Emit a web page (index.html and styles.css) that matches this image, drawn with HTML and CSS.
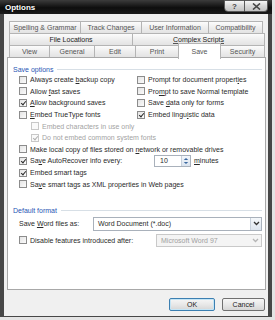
FILE: index.html
```html
<!DOCTYPE html>
<html lang="en">
<head>
    <meta charset="UTF-8">
    <title>Options</title>
    <link rel="stylesheet" href="styles.css">
</head>
<body>
    <div class="window">
        <div class="titlebar">
            <span class="title">Options</span>
            <div class="caption">
                <span class="cbtn help">?</span>
                <span class="cbtn close">
                    <svg width="9" height="7" viewBox="0 0 9 7"><path d="M1 0.5 L8 6.5 M8 0.5 L1 6.5" stroke="#444" stroke-width="1.6"/></svg>
                </span>
            </div>
        </div>
        <div class="body">
            <div class="tabs">
                <div class="tab-row">
                    <div class="tab" style="width:72px">Spelling &amp; Grammar</div>
                    <div class="tab" style="width:62px">Track Changes</div>
                    <div class="tab" style="width:68px">User Information</div>
                    <div class="tab" style="width:55px">Compatibility</div>
                </div>
                <div class="tab-row mid">
                    <div class="tab" style="width:124px">File Locations</div>
                    <div class="tab" style="width:133px"><span class="focus">Complex Scripts</span></div>
                </div>
                <div class="tab-row">
                    <div class="tab" style="width:41px">View</div>
                    <div class="tab" style="width:46px">General</div>
                    <div class="tab" style="width:42px">Edit</div>
                    <div class="tab" style="width:44px">Print</div>
                    <div class="tab active" style="width:43px">Save</div>
                    <div class="tab" style="width:45px">Security</div>
                </div>
            </div>

            <div class="panel">
                <div class="group">Save options</div>
                <div class="opts">
                    <div class="grid2">
                        <div class="row"><span class="cb"></span><span>Always create <u>b</u>ackup copy</span></div>
                        <div class="row"><span class="cb"></span><span>Prompt for document propert<u>i</u>es</span></div>
                        <div class="row"><span class="cb"></span><span>Allow <u>f</u>ast saves</span></div>
                        <div class="row"><span class="cb"></span><span>Pro<u>m</u>pt to save Normal template</span></div>
                        <div class="row"><span class="cb on"></span><span><u>A</u>llow background saves</span></div>
                        <div class="row"><span class="cb"></span><span>Save <u>d</u>ata only for forms</span></div>
                        <div class="row"><span class="cb"></span><span><u>E</u>mbed TrueType fonts</span></div>
                        <div class="row"><span class="cb on"></span><span>Embed lingu<u>i</u>stic data</span></div>
                    </div>
                    <div class="row sub off"><span class="cb"></span><span>Embed characters in use only</span></div>
                    <div class="row sub off"><span class="cb on"></span><span>Do not embed common system fonts</span></div>
                    <div class="row"><span class="cb"></span><span>Make local copy of files stored on <u>n</u>etwork or removable drives</span></div>
                    <div class="row">
                        <span class="cb on"></span><span class="autolabel">Sa<u>v</u>e AutoRecover info every:</span>
                        <span class="spin">
                            <span class="spin-val">10</span>
                            <span class="spin-btns">
                                <svg width="9" height="10" viewBox="0 0 9 10"><path d="M2 4 L4.5 1.5 L7 4 Z M2 6 L4.5 8.5 L7 6 Z" fill="#3d6aa0"/></svg>
                            </span>
                        </span>
                        <span class="after"><u>m</u>inutes</span>
                    </div>
                    <div class="row"><span class="cb on"></span><span>Embed smart tags</span></div>
                    <div class="row"><span class="cb"></span><span>Sa<u>v</u>e smart tags as XML properties in Web pages</span></div>
                </div>

                <div class="group format">Default format</div>
                <div class="field">
                    <span class="field-label">Save <u>W</u>ord files as:</span>
                    <span class="select wide">
                        <span class="select-val">Word Document (*.doc)</span>
                        <span class="arrow">
                            <svg width="7" height="5" viewBox="0 0 7 5"><path d="M1 1 L3.5 3.5 L6 1" stroke="#333" stroke-width="1.3" fill="none"/></svg>
                        </span>
                    </span>
                </div>
                <div class="field second">
                    <span class="cb"></span><span class="disable-label">Disable features introduced after:</span>
                    <span class="select narrow disabled">
                        <span class="select-val">Microsoft Word 97</span>
                        <span class="arrow">
                            <svg width="7" height="5" viewBox="0 0 7 5"><path d="M1 1 L3.5 3.5 L6 1" stroke="#b5b5b5" stroke-width="1.3" fill="none"/></svg>
                        </span>
                    </span>
                </div>
            </div>

            <div class="buttons">
                <span class="btn default ok">OK</span>
                <span class="btn cancel">Cancel</span>
            </div>
        </div>
    </div>
</body>
</html>
```

FILE: styles.css
```css
* {
    box-sizing: border-box;
}
body {
    margin: 0;
    background-color: #e4e4e4;
    font-family: "Liberation Sans", Arial, sans-serif;
    font-size: 7px;
    color: #2a2a2a;
}
u {
    text-decoration: underline;
}
.window {
    width: 272px;
    height: 317px;
    background-color: #474747;
    display: flex;
    flex-direction: column;
}
.titlebar {
    height: 14px;
    background: linear-gradient(#3c3c3c, #0e0e0e 55%, #1b1b1b);
    display: flex;
    align-items: flex-start;
    padding-left: 5px;
}
.title {
    color: white;
    font-weight: bold;
    font-size: 8px;
    line-height: 15px;
    text-shadow: 0 0 3px #000;
}
.caption {
    margin-left: auto;
    margin-right: 4px;
    display: flex;
}
.cbtn {
    width: 21px;
    height: 12px;
    border: 1px solid #5a5a5a;
    background: linear-gradient(#f6f6f6, #d8d8d8 50%, #c4c4c4);
    display: flex;
    align-items: center;
    justify-content: center;
    font-size: 8px;
    font-weight: bold;
    color: #444;
}
.cbtn.help {
    border-radius: 0 0 0 4px;
}
.cbtn.close {
    width: 23px;
    border-left: none;
    border-radius: 0 0 4px 0;
}
.body {
    flex: 1;
    background-color: #f0f0f0;
    margin: 0 4px 1px 4px;
    padding: 7px 2px 0 3px;
    display: flex;
    flex-direction: column;
}
.tabs {
    margin-left: 2px;
    width: 257px;
}
.tab-row {
    display: flex;
    height: 13px;
}
.tab-row + .tab-row {
    margin-top: -1px;
}
.tab {
    height: 100%;
    border: 1px solid #b4b4b4;
    margin-left: -1px;
    background: linear-gradient(#fcfcfc, #eeeeee 50%, #e3e3e3);
    color: #555;
    text-align: center;
    line-height: 11px;
    white-space: nowrap;
    overflow: hidden;
}
.tab:first-child {
    margin-left: 0;
}
.tab-row.mid .tab {
    color: #222;
}
.focus {
    border-bottom: 1px solid #555;
}
.tab.active {
    position: relative;
    z-index: 1;
    height: 16px;
    margin-top: -2px;
    background: white;
    border-bottom: none;
    line-height: 15px;
}
.panel {
    height: 233px;
    background-color: white;
    border: 1px solid #a8a8a8;
    margin-top: -1px;
    padding: 6px 3px 0 5px;
}
.group {
    display: flex;
    align-items: center;
    height: 10px;
    color: #1f56b4;
}
.group::after {
    content: "";
    flex: 1;
    height: 1px;
    background-color: #d7dfe6;
    margin-left: 4px;
}
.opts {
    padding-left: 6px;
}
.grid2 {
    display: grid;
    grid-template-columns: 118px 1fr;
}
.row {
    height: 11.6px;
    display: flex;
    align-items: center;
    white-space: nowrap;
}
.row.sub {
    padding-left: 12px;
}
.row.off {
    color: #a3a3a3;
}
.cb {
    flex: none;
    width: 8px;
    height: 8px;
    margin-right: 3px;
    border: 1px solid #8c8c8c;
    background: linear-gradient(135deg, #e4e4e4, #fbfbfb);
    display: flex;
    align-items: center;
    justify-content: center;
}
.cb.on::after {
    content: "";
    width: 2px;
    height: 4px;
    margin-top: -1px;
    border: solid #2b2b2b;
    border-width: 0 1.2px 1.2px 0;
    transform: rotate(40deg);
}
.off .cb {
    border-color: #c8c8c8;
    background: #fafafa;
}
.off .cb.on::after {
    border-color: #b0b0b0;
}
.autolabel {
    width: 124px;
}
.spin {
    flex: none;
    width: 37px;
    height: 12px;
    border: 1px solid #a9b1bb;
    display: flex;
    align-items: center;
    background: white;
}
.spin-val {
    flex: 1;
    padding-left: 5px;
}
.spin-btns {
    width: 9px;
    height: 10px;
    background: linear-gradient(#f4f7fb, #dbe4ef);
    border-left: 1px solid #c8d1dc;
    display: flex;
}
.after {
    margin-left: 3px;
}
.group.format {
    margin-top: 16px;
}
.field {
    display: flex;
    align-items: center;
    height: 14px;
    margin-top: 1px;
    padding-left: 6px;
    white-space: nowrap;
}
.field.second {
    height: 13px;
    margin-top: 3px;
}
.field-label {
    width: 75px;
}
.disable-label {
    width: 127px;
}
.select {
    flex: none;
    height: 100%;
    border: 1px solid #a9b1bb;
    background: white;
    display: flex;
    align-items: center;
}
.select.wide {
    width: 169px;
}
.select.narrow {
    width: 106px;
}
.select-val {
    flex: 1;
    padding-left: 4px;
}
.arrow {
    width: 11px;
    height: 100%;
    background: linear-gradient(#f5f8fb, #dde5ef);
    border-left: 1px solid #c8d1dc;
    display: flex;
    align-items: center;
    justify-content: center;
}
.select.disabled {
    background: #f4f4f4;
    border-color: #c9c9c9;
    color: #a0a0a0;
}
.select.disabled .arrow {
    background: #f4f4f4;
    border-left: none;
}
.buttons {
    display: flex;
    justify-content: flex-end;
    gap: 7px;
    padding: 8px 1px 0 0;
}
.btn {
    height: 13px;
    border: 1px solid #707070;
    border-radius: 2px;
    background: linear-gradient(#f6f6f6, #e8e8e8 50%, #d6d6d6);
    display: flex;
    align-items: center;
    justify-content: center;
    color: #222;
}
.btn.ok {
    width: 46px;
}
.btn.cancel {
    width: 43px;
}
.btn.default {
    border-color: #3c7fb1;
    box-shadow: inset 0 0 0 1px #c4e5f6;
}
```
